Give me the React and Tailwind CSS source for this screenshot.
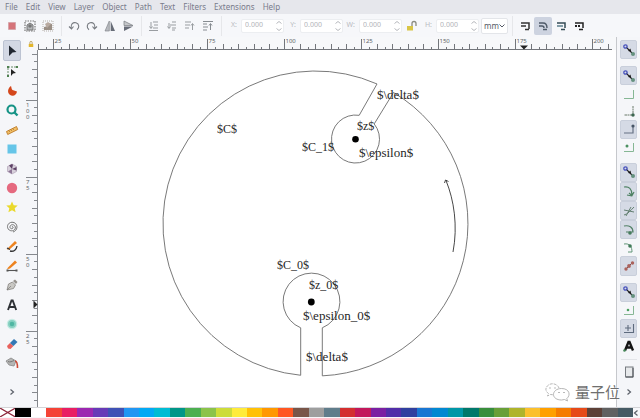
import React from "react";

const MENUS = ["File", "Edit", "View", "Layer", "Object", "Path", "Text", "Filters", "Extensions", "Help"];

const PALETTE = [
  "#000000", "#ffffff",
  "#f44336", "#e91e63", "#9c27b0", "#673ab7", "#3f51b5", "#2196f3", "#03a9f4", "#00bcd4", "#009688", "#4caf50",
  "#8bc34a", "#cddc39", "#ffeb3b", "#ffc107", "#ff9800", "#ff5722", "#795548", "#9e9e9e", "#607d8b",
  "#d32f2f", "#c2185b", "#7b1fa2", "#512da8", "#303f9f", "#1976d2", "#0288d1", "#0097a7", "#00796b", "#388e3c",
  "#689f38", "#afb42b", "#fbc02d", "#ffa000", "#f57c00", "#e64a19", "#5d4037", "#616161", "#455a64",
];

/* ---------- icon drawings, all on a 14 x 14 grid ---------- */

function Icon({ children }) {
  return (
    <svg viewBox="0 0 14 14" aria-hidden="true" className="h-[14px] w-[14px] shrink-0" fill="none">
      {children}
    </svg>
  );
}

const G = "#777b80";

const commandIcons = [
  ["Select all", <rect x="3.5" y="3.5" width="7" height="7" fill="#d5747a" stroke="#c9959a" strokeDasharray="1 1" />],
  ["Select all in all layers", <g><rect x="2" y="2" width="10" height="10" stroke="#777" strokeWidth="1.2" strokeDasharray="1.5 1" /><path d="M4 11V6l3-2 3 2v5z" fill="#b5b7ba" stroke="#777" /><circle cx="7" cy="7" r="1.8" fill="#777" /></g>],
  ["Deselect", <g><rect x="2" y="2" width="10" height="10" stroke="#b5afa9" strokeDasharray="1 1" /><path d="M3 11V8l4-1 1-3 3 1v6z" fill="#9b8f85" /><path d="M4 5l3-2 3 2-4 4z" fill="#b9aaa0" /></g>],
  null,
  ["Rotate left", <path d="M2 7.5L4.5 10l2-2.500M4.200 9.500C3.500 5 6 3 9 3.800c3.500 1 3.500 5 1 7" stroke={G} strokeWidth="1.1" />],
  ["Rotate right", <path d="M12 7.500L9.500 10l-2-2.500M9.800 9.500C10.500 5 8 3 5 3.800c-3.500 1-3.500 5-1 7" stroke={G} strokeWidth="1.100" />],
  ["Flip horizontal", <g><path d="M6.300 2v10H2z" fill="#b9bbc0" stroke={G} strokeWidth=".6" /><path d="M7.700 2v10H12z" fill="#686d78" /></g>],
  ["Flip vertical", <g><path d="M3 2v4.500h9z" fill="#c5c7ca" stroke={G} strokeWidth=".7" /><path d="M3 12V7.500h9z" fill="#686d78" /></g>],
  null,
  ["Lower to bottom", <path d="M6 3h5M7 6h4M6 9h5M2 11.500h9M4 3v6M2.500 7.500L4 9.500l1.500-2" stroke="#999da1" />],
  ["Lower", <path d="M7 3h4M5 6h6M7 9h4M7 11h3M4 4v5M2.500 7.500L4 9.500l1.500-2" stroke="#999da1" />],
  ["Raise", <path d="M2 3h6M2 6h5M2 9h4M9.500 11V5M8 6.500L9.500 4.500 11 6.500" stroke="#999da1" />],
  ["Raise to top", <path d="M2 2.500h10M2 5h4M2 8h5M2 11h4M9.500 11V5M8 6.500L9.500 4.500 11 6.500" stroke="#878c91" />],
  null,
];

const scaleIcons = [
  ["Scale stroke", <path d="M3 4h8v6M3 7h5M7 10.500h4" stroke="#333" strokeWidth="1.500" />],
  ["Scale corners", <path d="M3 4h4q4 0 4 5M3 7h3q2 0 2 2M7 10.500h4" stroke="#4e5968" strokeWidth="1.400" />],
  ["Move gradients", <g><path d="M3 4h8v5M7 10.500h4" stroke="#344b55" strokeWidth="1.500" /><path d="M3 6h6v2H3z" fill="#829da8" /></g>],
  ["Move patterns", <g><path d="M3 4h8v5M7 10.500h4" stroke="#222" strokeWidth="1.500" /><path d="M3 7h6" stroke="#222" strokeWidth="2" strokeDasharray="2 1" /></g>],
];

const tools = [
  ["Selector", <path d="M4 1.500l7.500 6.500-4 .500L4 12z" fill="#222831" />],
  ["Node", <g><path d="M3 12V3h8" stroke="#6b8d6d" strokeDasharray="2 1" /><path d="M2 2h2v2H2zM11 2h2v2h-2zM2 11h2v2H2z" fill="#4f8150" /><path d="M6 5l5 4-3 .500L6 12z" fill="#222" /></g>],
  ["Tweak", <path d="M6 2C3 4 2 8 4.500 10.500c3 2.500 7 1 7.500-3L7.500 6C6.500 5 6.500 3.500 6 2z" fill="#d4471c" />],
  ["Zoom", <g><circle cx="6.500" cy="6.500" r="4" stroke="#169386" strokeWidth="2.200" /><path d="M9.500 9.500l3 3" stroke="#169386" strokeWidth="2.400" /></g>],
  ["Measure", <g><path d="M1.500 8.500l10-5 1.200 3-10 5z" fill="#f2bf66" stroke="#bd7a27" strokeWidth=".9" /><path d="M4 7.500l.700 1.500M6 6.500l.700 1.500M8 5.500l.700 1.500" stroke="#a06520" strokeWidth=".6" /></g>],
  ["Rectangle", <rect x="2.500" y="2.500" width="9" height="9" fill="#66c5e8" />],
  ["3D box", <g><path d="M7 2l4.500 2.500v5L7 12 2.500 9.500v-5z" fill="#d6cfda" stroke="#a998b0" strokeWidth=".6" /><path d="M7 7L4 3.500 7 2l1 .8zM7 7l4.500-2v3.500z" fill="#5e4266" /><path d="M7 7v5L3 9.500z" fill="#8d7696" /></g>],
  ["Ellipse", <circle cx="7" cy="7" r="5.200" fill="#e5697f" />],
  ["Star", <path d="M7 1.500l1.700 3.700 4 .400-3 2.700.900 4L7 10.200l-3.600 2.100.9-4-3-2.700 4-.400z" fill="#ead92c" />],
  ["Spiral", <path d="M7 7c.500-1 1.500 0 1 1-1 1.500-3.500.500-3-1.500.7-2.500 4.500-2.500 5.300.5C11 10 7 12 4.200 10 1 7.500 2.500 2.500 7 2.200c3 0 5 2 5 5-.2 2.500-2 4.300-4 4.800" stroke="#686868" strokeWidth=".9" />],
  ["Pencil", <g><path d="M3 9l7-7 2 2-7 6-3 .800z" fill="#ed831f" /><path d="M2 9l3 1.500M5 12c4 1 6.500-1.500 7-5" stroke="#333" strokeWidth="1.300" /></g>],
  ["Pen", <g><path d="M3 8.500l7-7 2 2-7 6-3 .800z" fill="#ed831f" /><path d="M2 11.500h10" stroke="#555" strokeWidth="1.100" /><path d="M1.500 10.500h2v2h-2zM10.500 10.500h2v2h-2z" fill="#555" /></g>],
  ["Calligraphy", <g><path d="M2 12l1.500-6 4-2 3 3-2 3.500z" fill="#c9c8c4" stroke="#85837f" strokeWidth=".8" /><path d="M8 3l2-1.500 2.500 2.500L11 6z" fill="#96928d" /><path d="M2 12l4-4" stroke="#777" strokeWidth=".7" /></g>],
  ["Text", <path d="M3 12L6.500 2.500h1.200L11.200 12M4.500 9h5.200" stroke="#2d3035" strokeWidth="1.900" />],
  ["Gradient", <g><circle cx="7" cy="7" r="5.300" fill="#c8ebe4" /><circle cx="7" cy="7" r="4" fill="#86d0c1" /><circle cx="7" cy="7" r="2.300" fill="#4fb7a3" /></g>],
  ["Eraser", <g><path d="M2 9l3-3 3.500 3L5.500 12 3 11.500z" fill="#e8615d" /><path d="M5 6l4-4 3.500 3-4 4z" fill="#3378b5" /></g>],
  ["Paint bucket", <g><path d="M1 5l5-3 5 3-2 5-5-1z" fill="#b5b5b4" stroke="#888" strokeWidth=".8" /><path d="M3 5.500c2 1 4 0 6-1" stroke="#777" /><path d="M10 5c2 0 2.500 3 2.500 7" stroke="#cb4a37" strokeWidth="1.600" /></g>],
];

const snapMain = (
  <g>
    <path d="M4 4l6 6" stroke="#222" strokeWidth="1.100" />
    <circle cx="3.500" cy="3.500" r="1.700" stroke="#4550bd" strokeWidth="1.200" />
    <path d="M6 8l2.500-2.500L9 8.500z" fill="#111" />
    <circle cx="11" cy="11" r="2" fill="#65917f" />
  </g>
);

const snapGroups = [
  [["Enable snapping", true, snapMain]],
  [
    ["Snap bounding boxes", true, snapMain],
    ["Snap box edges", false, <path d="M2 11.500h9.500V3" stroke="#86b794" />],
    ["Snap box corners", false, <g><path d="M11 2v9H2" stroke="#687869" strokeDasharray="2 .5" /><circle cx="11" cy="11" r="1.700" fill="#3d6650" /></g>],
    ["Snap edge midpoints", true, <g><path d="M2 11h9V4" stroke="#667183" strokeWidth="1.200" /><circle cx="11" cy="4" r="1.600" fill="#475566" /></g>],
    ["Snap box centres", false, <g><path d="M2 11.500h9.500V3" stroke="#86b794" /><circle cx="5" cy="6" r="1.500" fill="#4a9060" /></g>],
  ],
  [
    ["Snap nodes", true, snapMain],
    ["Snap to paths", true, <path d="M2 3c5-1 8 2 8 8M7 9l3 2.500L12 8M5 11l5 1" stroke="#4d8062" strokeWidth="1.200" />],
    ["Snap to intersections", true, <path d="M2 11c4-1 6-4 10-8M2 6l10 2M4 12L9 3" stroke="#648072" />],
    ["Snap cusp nodes", true, <g><path d="M2 3c5-1 9 1 9 6H4" stroke="#528066" strokeWidth="1.200" /><circle cx="8" cy="10" r="1.800" fill="#477b5d" /></g>],
    ["Snap smooth nodes", false, <g><path d="M2 3c6-1 8 3 8 8H6" stroke="#609577" /><circle cx="8" cy="5" r="1.800" fill="#3f7957" /></g>],
    ["Snap line midpoints", true, <g><path d="M3 11l8-8" stroke="#774849" /><circle cx="4" cy="10" r="1.700" fill="#aa625c" /><circle cx="7" cy="7" r="1.900" fill="#aa625c" /><circle cx="10.500" cy="4" r="1.700" fill="#aa625c" /></g>],
  ],
  [
    ["Snap other points", true, snapMain],
    ["Snap object centres", false, <g><path d="M2 11.500h9.500V3" stroke="#86b794" /><circle cx="6" cy="7" r="1.300" fill="#4ba05f" /></g>],
    ["Snap rotation centres", true, <path d="M2 11.500h9.500V3M3 7h6M6 4v6" stroke="#5e6b7e" strokeWidth="1.100" />],
    ["Snap text baselines", false, <g><path d="M3 11.500L6.500 3h1L11 11.500M4.500 8.500h5" stroke="#151515" strokeWidth="2.400" /><circle cx="2.500" cy="11.500" r="1.300" fill="#458958" /></g>],
  ],
];

/* ---------- toolbar ---------- */

function Separator() {
  return (
    <div className="flex w-2 shrink-0 justify-center">
      <div className="h-5 w-px bg-[#e6e7ea]" />
    </div>
  );
}

function CommandButton({ label, active = false, children }) {
  return (
    <button
      type="button"
      aria-label={label}
      className={"flex h-[18px] w-[18px] shrink-0 items-center justify-center rounded-xs " + (active ? "bg-[#cdd3e0]" : "")}
    >
      <Icon>{children}</Icon>
    </button>
  );
}

function NumberField({ name }) {
  const id = "field-" + name;
  return (
    <div className="flex shrink-0 items-center">
      <label htmlFor={id} className="w-4 pr-1 text-right text-[7px] text-[#b9bbc1]">{name}:</label>
      <div className="flex h-[14px] w-[43px] items-center rounded-xs border border-[#eceef1] bg-white pl-[3px]">
        <input id={id} defaultValue="0.000" className="w-0 flex-1 bg-transparent text-[7px] text-[#b3b4b9] outline-none" />
        <svg viewBox="0 0 8 12" aria-hidden="true" className="h-3 w-2 shrink-0" fill="none" stroke="#b6b8bd">
          <path d="M1.500 3.500L4 1.500l2.500 2M1.500 8.500l2.500 2 2.500-2" />
        </svg>
      </div>
    </div>
  );
}

function Toolbar() {
  return (
    <div className="flex h-[23px] shrink-0 items-center overflow-hidden bg-[#f6f7fa] pl-[3px]">
      {commandIcons.map((item, i) =>
        item ? <CommandButton key={i} label={item[0]}>{item[1]}</CommandButton> : <Separator key={i} />
      )}
      <NumberField name="X" />
      <NumberField name="Y" />
      <NumberField name="W" />
      <CommandButton label="Lock proportions">
        <path d="M3 7h6v4.500H3z" fill="#d9c545" />
        <path d="M8 7V4.500q0-2 2-2t2 2V7" stroke="#8b8b80" strokeWidth="1.300" />
      </CommandButton>
      <NumberField name="H" />
      <div className="ml-[2px] grid h-4 w-[27px] shrink-0 items-center">
        <select aria-label="Units" defaultValue="mm" className="col-start-1 row-start-1 block h-4 w-full appearance-none rounded-xs border border-[#e3e5e9] bg-white pl-[2px] text-[8px] leading-3 text-[#555b66]">
          <option>mm</option>
          <option>px</option>
        </select>
        <svg viewBox="0 0 6 4" aria-hidden="true" className="pointer-events-none col-start-1 row-start-1 mr-[3px] h-1 w-1.5 justify-self-end" fill="none" stroke="#555b66">
          <path d="M.500 .500L3 3 5.500.500" />
        </svg>
      </div>
      <Separator />
      {scaleIcons.map(([label, art], i) => (
        <CommandButton key={label} label={label} active={i === 1}>{art}</CommandButton>
      ))}
    </div>
  );
}

/* ---------- rulers ---------- */

const RULER_FONT = "font-['Noto_Sans',sans-serif] text-[6px]";

function HorizontalRuler() {
  const ticks = Array.from({ length: 75 }, (_, k) => k);
  return (
    <svg aria-label="Horizontal ruler" className={"h-[13px] min-w-0 flex-1 " + RULER_FONT}>
      <path d="M0 12.500H574" stroke="#73767b" />
      {ticks.map((k) => {
        const x = Math.round(k * 7.7) + 0.5;
        const major = k % 10 === 2;
        const top = major ? 2 : k % 2 === 0 ? 7 : 10;
        return (
          <g key={k}>
            <path d={`M${x} ${top}V12`} stroke="#73767b" />
            {major && <text x={x + 1} y="6" fill="#63666b">{25 + (k - 2) * 2.5}</text>}
          </g>
        );
      })}
      <path d="M482 8.500h8l-4 4z" fill="#222" />
    </svg>
  );
}

const V_LABELS = { 6: "100", 16: "75", 26: "50", 36: "25" };

function VerticalRuler() {
  const ticks = Array.from({ length: 46 }, (_, k) => k);
  return (
    <svg aria-label="Vertical ruler" className={"h-full w-[14px] shrink-0 " + RULER_FONT}>
      <path d="M13.500 0V357" stroke="#85888d" />
      {ticks.map((k) => {
        const y = Math.round(3.5 + k * 7.7) + 0.5;
        const label = V_LABELS[k];
        const left = label ? 2 : k % 2 === 0 ? 8 : 10;
        return (
          <g key={k}>
            <path d={`M${left} ${y}H13`} stroke="#85888d" />
            {label && label.split("").map((d, i) => (
              <text key={i} x="2" y={y + 6 + i * 6} fill="#63666b">{d}</text>
            ))}
          </g>
        );
      })}
      <path d="M9.500 250.500l4 4-4 4z" fill="#222" />
    </svg>
  );
}

/* ---------- drawing ---------- */

const LONG = "font-['Liberation_Serif',serif] text-[13px]";
const SHORT = "font-['Liberation_Serif',serif] text-[12px]";

function Drawing() {
  return (
    <svg viewBox="38 50 578 357" preserveAspectRatio="xMidYMid meet" className="h-full min-w-0 flex-1 bg-white" fill="none">
      <g stroke="#6a6a6a" strokeWidth=".9">
        <path d="M377 83.960A152.500 152.500 0 1 0 300.700 375.280V327.800A28.400 28.400 0 1 1 322.300 327.800V375.850A152.500 152.500 0 0 0 393.500 92.500L374.200 123.950A24 24 0 1 1 359.200 115.300Z" />
        <path d="M453 252C458 226 454 200 446 180.500M444.500 183l1-3 3 1.500" stroke="#333" />
      </g>
      <circle cx="355.500" cy="139.200" r="3.300" fill="#000" />
      <circle cx="311.300" cy="302" r="3.400" fill="#000" />
      <g fill="#262626">
        <text x="217" y="133" className={SHORT}>$C$</text>
        <text x="377" y="99" className={LONG}>$\delta$</text>
        <text x="357" y="130" className={SHORT}>$z$</text>
        <text x="302" y="151" className={SHORT}>$C_1$</text>
        <text x="359" y="157" className={LONG}>$\epsilon$</text>
        <text x="277" y="269" className={SHORT}>$C_0$</text>
        <text x="309" y="289" className={SHORT}>$z_0$</text>
        <text x="303" y="320" className={LONG}>$\epsilon_0$</text>
        <text x="306" y="361" className={LONG}>$\delta$</text>
      </g>
    </svg>
  );
}

function Watermark() {
  return (
    <div className="pointer-events-none absolute right-5 bottom-4 flex items-center gap-1 text-[#6f6f6f]">
      <svg viewBox="0 0 27 20" aria-hidden="true" className="h-5 w-[27px]" fill="none" stroke="#a3a3a3" strokeWidth=".8">
        <path d="M15 6C13.500 2 8 .500 4.500 3 1 5.500 1 9 4.500 11.500L3.500 14l3-1.500 3 .300" strokeDasharray="3 1" />
        <path d="M17.500 6.500c-5 0-8 3-8 6s3 5.500 8 5.500l3-.500 3 1.500-.700-2.500c4-3 3-10-5.300-10z" />
        <path d="M5.500 6h1M10.500 6h1M14.500 10.500h1M19.500 10.500h1" stroke="#777" strokeWidth="1.200" />
      </svg>
      <span className="font-['Noto_Sans_CJK_SC',sans-serif] text-[15px] leading-5 [text-shadow:0_0_2px_white]">量子位</span>
    </div>
  );
}

/* ---------- side bars ---------- */

function Chevron({ left = false }) {
  return (
    <svg viewBox="0 0 6 8" aria-hidden="true" className="h-2 w-1.5" fill="none" stroke="#5b6069" strokeWidth="1.200">
      <path d={left ? "M4.500 1.500L1.500 4l3 2.500" : "M1.500 1.500L4.500 4l-3 2.500"} />
    </svg>
  );
}

function Toolbox() {
  return (
    <nav aria-label="Tools" className="flex w-6 shrink-0 flex-col items-center pt-[3px]">
      {tools.map(([label, art], i) => (
        <button
          key={label}
          type="button"
          aria-label={label}
          className={"flex min-h-0 w-[18px] flex-1 items-center justify-center rounded-xs " + (i === 0 ? "border border-[#bcc3d2] bg-[#d3d8e4]" : "")}
        >
          <Icon>{art}</Icon>
        </button>
      ))}
      <button type="button" aria-label="More tools" className="flex h-[34px] w-full items-center justify-center pt-1">
        <Chevron />
      </button>
    </nav>
  );
}

function SnapBar() {
  return (
    <aside aria-label="Snapping" className="flex w-6 shrink-0 flex-col items-center border-l border-[#c6c8cc] pt-[3px]">
      {snapGroups.map((group, g) => (
        <React.Fragment key={g}>
          {g > 0 && <div className="h-[7px] shrink-0" />}
          {group.map(([label, active, art]) => (
            <button
              key={label}
              type="button"
              aria-label={label}
              className={"flex min-h-0 w-[17px] flex-1 items-center justify-center rounded-xs " + (active ? "border border-[#c9cfdb] bg-[#d5dae5]" : "")}
            >
              <Icon>{art}</Icon>
            </button>
          ))}
        </React.Fragment>
      ))}
      <div className="mt-1 h-px w-4 bg-[#e2e4e8]" />
      <button type="button" aria-label="Snap page border" className="flex h-6 items-center">
        <Icon>
          <rect x="3.500" y="2" width="7.500" height="10" fill="#e7e9eb" stroke="#777b80" />
          <path d="M4 12h7V3" stroke="#4d5156" />
        </Icon>
      </button>
      <button type="button" aria-label="More snapping" className="flex h-[23px] items-center pb-[7px]">
        <Chevron />
      </button>
    </aside>
  );
}

function Palette() {
  return (
    <div className="flex h-[11px] shrink-0 border-t border-[#d3d4d7] bg-[#f6f7fa] pb-px">
      <button type="button" aria-label="No colour" className="min-w-0 flex-1 bg-white">
        <svg viewBox="0 0 15 9" preserveAspectRatio="none" className="h-full w-full" stroke="#8d2439" strokeWidth="1.200">
          <path d="M0 0L15 9M15 0L0 9" />
        </svg>
      </button>
      {PALETTE.map((color) => (
        <button key={color} type="button" aria-label={color} className="min-w-0 flex-1" style={{ backgroundColor: color }} />
      ))}
      <button type="button" aria-label="Palette menu" className="flex w-[7px] shrink-0 items-center justify-center">
        <Chevron left />
      </button>
    </div>
  );
}

export default function App() {
  return (
    <div className="relative flex h-screen flex-col overflow-hidden bg-[#f5f6f9] font-['Noto_Sans',sans-serif]">
      <nav aria-label="Menu" className="flex h-[14px] shrink-0 items-center gap-2 bg-[#e6e7ec] pl-[5px] text-[8px] leading-none text-[#797b8b]">
        {MENUS.map((m) => (
          <button key={m} type="button">{m}</button>
        ))}
      </nav>
      <Toolbar />
      <div className="flex min-h-0 flex-1">
        <Toolbox />
        <main className="flex min-w-0 flex-1 flex-col">
          <div className="flex h-[13px] shrink-0 bg-[#f7f8fa]">
            <button type="button" aria-label="Lock guides" className="flex w-[14px] items-center justify-center">
              <svg viewBox="0 0 8 10" className="h-2 w-1.5" fill="none">
                <path d="M1 5h6v4H1z" fill="#e2b62c" />
                <path d="M2.500 5V3q0-1.500 1.500-1.500T5.500 3v2" stroke="#b59b55" strokeWidth="1.200" />
              </svg>
            </button>
            <HorizontalRuler />
          </div>
          <div className="flex min-h-0 flex-1">
            <VerticalRuler />
            <Drawing />
          </div>
        </main>
        <SnapBar />
      </div>
      <Palette />
      <Watermark />
    </div>
  );
}
